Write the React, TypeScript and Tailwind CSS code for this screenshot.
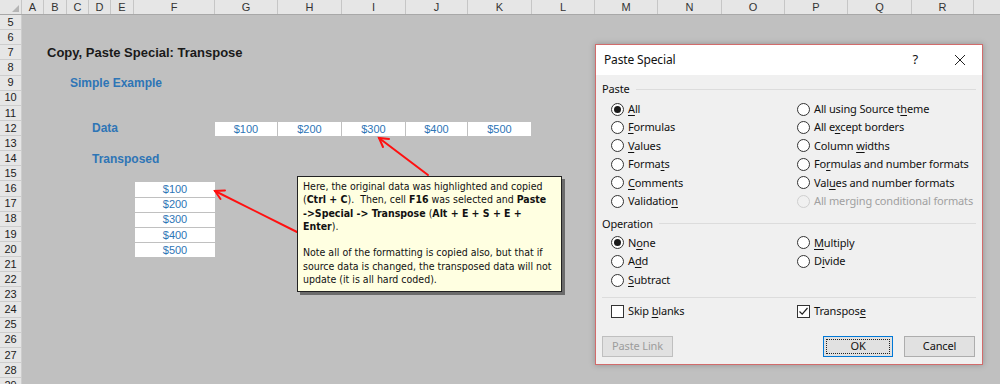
import type { ReactNode } from "react";

const COLS = [
  ["A", 22], ["B", 23], ["C", 22], ["D", 22], ["E", 23], ["F", 81], ["G", 63], ["H", 64],
  ["I", 64], ["J", 62], ["K", 64], ["L", 63], ["M", 63], ["N", 64], ["O", 63], ["P", 63],
  ["Q", 64], ["R", 62], ["", 64],
] as const;

const ROWS = Array.from({ length: 25 }, (_, i) => i + 5);

function Cell({ w, children }: { w: number; children: ReactNode }) {
  return (
    <div className="h-full shrink-0 pl-px pt-px" style={{ width: w }}>
      <div className="flex h-full items-center justify-center bg-white text-[11px] text-[#2e75b6]">
        {children}
      </div>
    </div>
  );
}

function Spacer({ w }: { w: number }) {
  return <div className="shrink-0" style={{ width: w }} />;
}

function rowContent(r: number) {
  switch (r) {
    case 7:
      return (
        <>
          <Spacer w={25} />
          <span className="whitespace-nowrap text-[13px] font-bold text-[#1a1a1a]">
            Copy, Paste Special: Transpose
          </span>
        </>
      );
    case 9:
      return (
        <>
          <Spacer w={48} />
          <span className="whitespace-nowrap text-[12px] font-bold text-[#2e75b6]">Simple Example</span>
        </>
      );
    case 12:
      return (
        <>
          <Spacer w={70} />
          <span className="w-[122px] shrink-0 whitespace-nowrap text-[12px] font-bold text-[#2e75b6]">Data</span>
          <Cell w={63}>$100</Cell>
          <Cell w={64}>$200</Cell>
          <Cell w={64}>$300</Cell>
          <Cell w={62}>$400</Cell>
          <Cell w={64}>$500</Cell>
        </>
      );
    case 14:
      return (
        <>
          <Spacer w={70} />
          <span className="whitespace-nowrap text-[12px] font-bold text-[#2e75b6]">Transposed</span>
        </>
      );
    case 16:
    case 17:
    case 18:
    case 19:
    case 20:
      return (
        <>
          <Spacer w={112} />
          <Cell w={81}>${(r - 15) * 100}</Cell>
        </>
      );
    default:
      return null;
  }
}

function U({ children }: { children: ReactNode }) {
  return <span className="underline decoration-1 underline-offset-2">{children}</span>;
}

function Radio({ on, disabled, children }: { on?: boolean; disabled?: boolean; children: ReactNode }) {
  return (
    <div className={`flex h-full items-center gap-[4px] ${disabled ? "text-[#a0a0a0]" : "text-[#111]"}`}>
      <span
        className={`flex h-[13px] w-[13px] shrink-0 items-center justify-center rounded-full border ${
          disabled ? "border-[#cfcfcf] bg-[#f0f0f0]" : "border-[#333] bg-white"
        }`}
      >
        {on ? <span className="h-[7px] w-[7px] rounded-full bg-[#1a1a1a]" /> : null}
      </span>
      <span className="whitespace-nowrap">{children}</span>
    </div>
  );
}

function Check({ on, children }: { on?: boolean; children: ReactNode }) {
  return (
    <div className="flex h-full items-center gap-[4px] text-[#111]">
      <span className="flex h-[13px] w-[13px] shrink-0 items-center justify-center border border-[#333] bg-white">
        {on ? (
          <svg width="11" height="11" viewBox="0 0 11 11">
            <path d="M1.5 5.5 L4.2 8.2 L9.5 2" fill="none" stroke="#222" strokeWidth="1.2" />
          </svg>
        ) : null}
      </span>
      <span className="whitespace-nowrap">{children}</span>
    </div>
  );
}

function GroupLabel({ children }: { children: ReactNode }) {
  return (
    <div className="flex h-[14px] items-center gap-[6px] text-[#111]">
      <span>{children}</span>
      <div className="h-px flex-1 bg-[#dcdcdc]" />
    </div>
  );
}

function PasteDialog() {
  return (
    <div
      className="absolute left-[595px] top-[44px] w-[388px] border border-[#d16b6b] bg-[#f0f0f0] text-[11px] tracking-[-0.15px] shadow-[0_0_6px_rgba(0,0,0,0.25)]"
      style={{ fontFamily: '"Noto Sans", "Open Sans", sans-serif' }}
    >
      <div className="flex h-[30px] items-center bg-white pl-[8px] pr-[16px] text-[12px] text-[#111]">
        <span className="flex-1">Paste Special</span>
        <span className="mr-[36px] text-[13px]">?</span>
        <svg width="12" height="12" viewBox="0 0 12 12">
          <path d="M1 1 L11 11 M11 1 L1 11" stroke="#222" strokeWidth="1" />
        </svg>
      </div>

      <div className="px-[6px] pb-[7px] pt-[7px]">
        <GroupLabel>Paste</GroupLabel>
        <div className="mt-[4px] grid grid-cols-[186px_1fr] grid-rows-[repeat(6,18.4px)] pl-[9px]">
          <Radio on><U>A</U>ll</Radio>
          <Radio>All using Source t<U>h</U>eme</Radio>
          <Radio><U>F</U>ormulas</Radio>
          <Radio>All e<U>x</U>cept borders</Radio>
          <Radio><U>V</U>alues</Radio>
          <Radio>Column <U>w</U>idths</Radio>
          <Radio>Forma<U>t</U>s</Radio>
          <Radio>Fo<U>r</U>mulas and number formats</Radio>
          <Radio><U>C</U>omments</Radio>
          <Radio>Val<U>u</U>es and number formats</Radio>
          <Radio>Validatio<U>n</U></Radio>
          <Radio disabled>All merging conditional formats</Radio>
        </div>

        <div className="mt-[6.6px]">
          <GroupLabel>Operation</GroupLabel>
        </div>
        <div className="mt-[2.6px] grid grid-cols-[186px_1fr] grid-rows-[repeat(3,18.7px)] pl-[9px]">
          <Radio on>N<U>o</U>ne</Radio>
          <Radio><U>M</U>ultiply</Radio>
          <Radio>A<U>d</U>d</Radio>
          <Radio>D<U>i</U>vide</Radio>
          <Radio><U>S</U>ubtract</Radio>
          <div />
        </div>

        <div className="mt-[7px] h-px bg-[#dcdcdc]" />

        <div className="mt-[5px] grid h-[18px] grid-cols-[186px_1fr] pl-[9px]">
          <Check>Skip <U>b</U>lanks</Check>
          <Check on>Transpos<U>e</U></Check>
        </div>

        <div className="mt-[15px] flex h-[21px] items-stretch">
          <div className="flex w-[71px] items-center justify-center border border-[#bfbfbf] bg-[#e1e1e1] text-[#9c9c9c]">
            Paste Link
          </div>
          <div className="flex-1" />
          <div className="flex w-[70px] items-stretch border border-[#0078d7] bg-[#e1e1e1] p-[2px]">
            <div className="flex flex-1 items-center justify-center border border-dotted border-[#222] text-[#111]">
              OK
            </div>
          </div>
          <div className="ml-[11px] mr-px flex w-[71px] items-center justify-center border border-[#adadad] bg-[#e1e1e1] text-[#111]">
            Cancel
          </div>
        </div>
      </div>
    </div>
  );
}

function Callout() {
  return (
    <div
      className="absolute left-[297px] top-[176px] h-[116px] w-[265px] border border-[#222] bg-[#ffffe1] px-[5px] pt-[3px] text-[10.5px] leading-[13.3px] text-[#111] shadow-[3px_3px_0_#6b6b6b]"
      style={{ fontFamily: '"DejaVu Sans Condensed", "Liberation Sans", sans-serif' }}
    >
      <div>Here, the original data was highlighted and copied</div>
      <div>
        (<b>Ctrl + C</b>).&nbsp; Then, cell <b>F16</b> was selected and <b>Paste</b>
      </div>
      <div>
        <b>-&gt;Special -&gt; Transpose</b> (<b>Alt + E + S + E +</b>
      </div>
      <div>
        <b>Enter</b>).
      </div>
      <div>&nbsp;</div>
      <div>Note all of the formatting is copied also, but that if</div>
      <div>source data is changed, the transposed data will not</div>
      <div>update (it is all hard coded).</div>
    </div>
  );
}

function Arrows() {
  return (
    <svg className="pointer-events-none absolute left-0 top-0" width="1000" height="384">
      <g stroke="#ff1010" strokeWidth="2" fill="none" strokeLinecap="round">
        <path d="M428 175 L379 138" />
        <path d="M383 147 L379 138 L389 139" />
        <path d="M297 232 L215 191" />
        <path d="M220.5 199 L215 191 L225 190.4" />
      </g>
    </svg>
  );
}

export default function App() {
  return (
    <div
      className="relative h-[384px] w-[1000px] overflow-hidden bg-[#c0c0c0]"
      style={{ fontFamily: '"Liberation Sans", Arial, sans-serif' }}
    >
      <div className="flex h-[15px] border-b border-[#a8a8a8] bg-[#e6e6e6] text-[11px] text-[#333]">
        <div className="relative w-[22px] shrink-0 border-r border-[#c6c6c6]">
          <svg className="absolute bottom-[2px] right-[2px]" width="7" height="7" viewBox="0 0 7 7">
            <path d="M7 0 L7 7 L0 7 Z" fill="#b5b5b5" />
          </svg>
        </div>
        {COLS.map(([c, w], i) => (
          <div
            key={i}
            className="flex shrink-0 items-center justify-center border-r border-[#c6c6c6]"
            style={{ width: w }}
          >
            {c}
          </div>
        ))}
      </div>

      {ROWS.map((r) => (
        <div key={r} className="flex h-[15.13px]">
          <div className="flex w-[22px] shrink-0 items-center justify-center border-b border-r border-[#cdcdcd] bg-[#e6e6e6] text-[11px] text-[#222]">
            {r}
          </div>
          <div className="flex flex-1 items-center">{rowContent(r)}</div>
        </div>
      ))}

      <Arrows />
      <Callout />
      <PasteDialog />
    </div>
  );
}
